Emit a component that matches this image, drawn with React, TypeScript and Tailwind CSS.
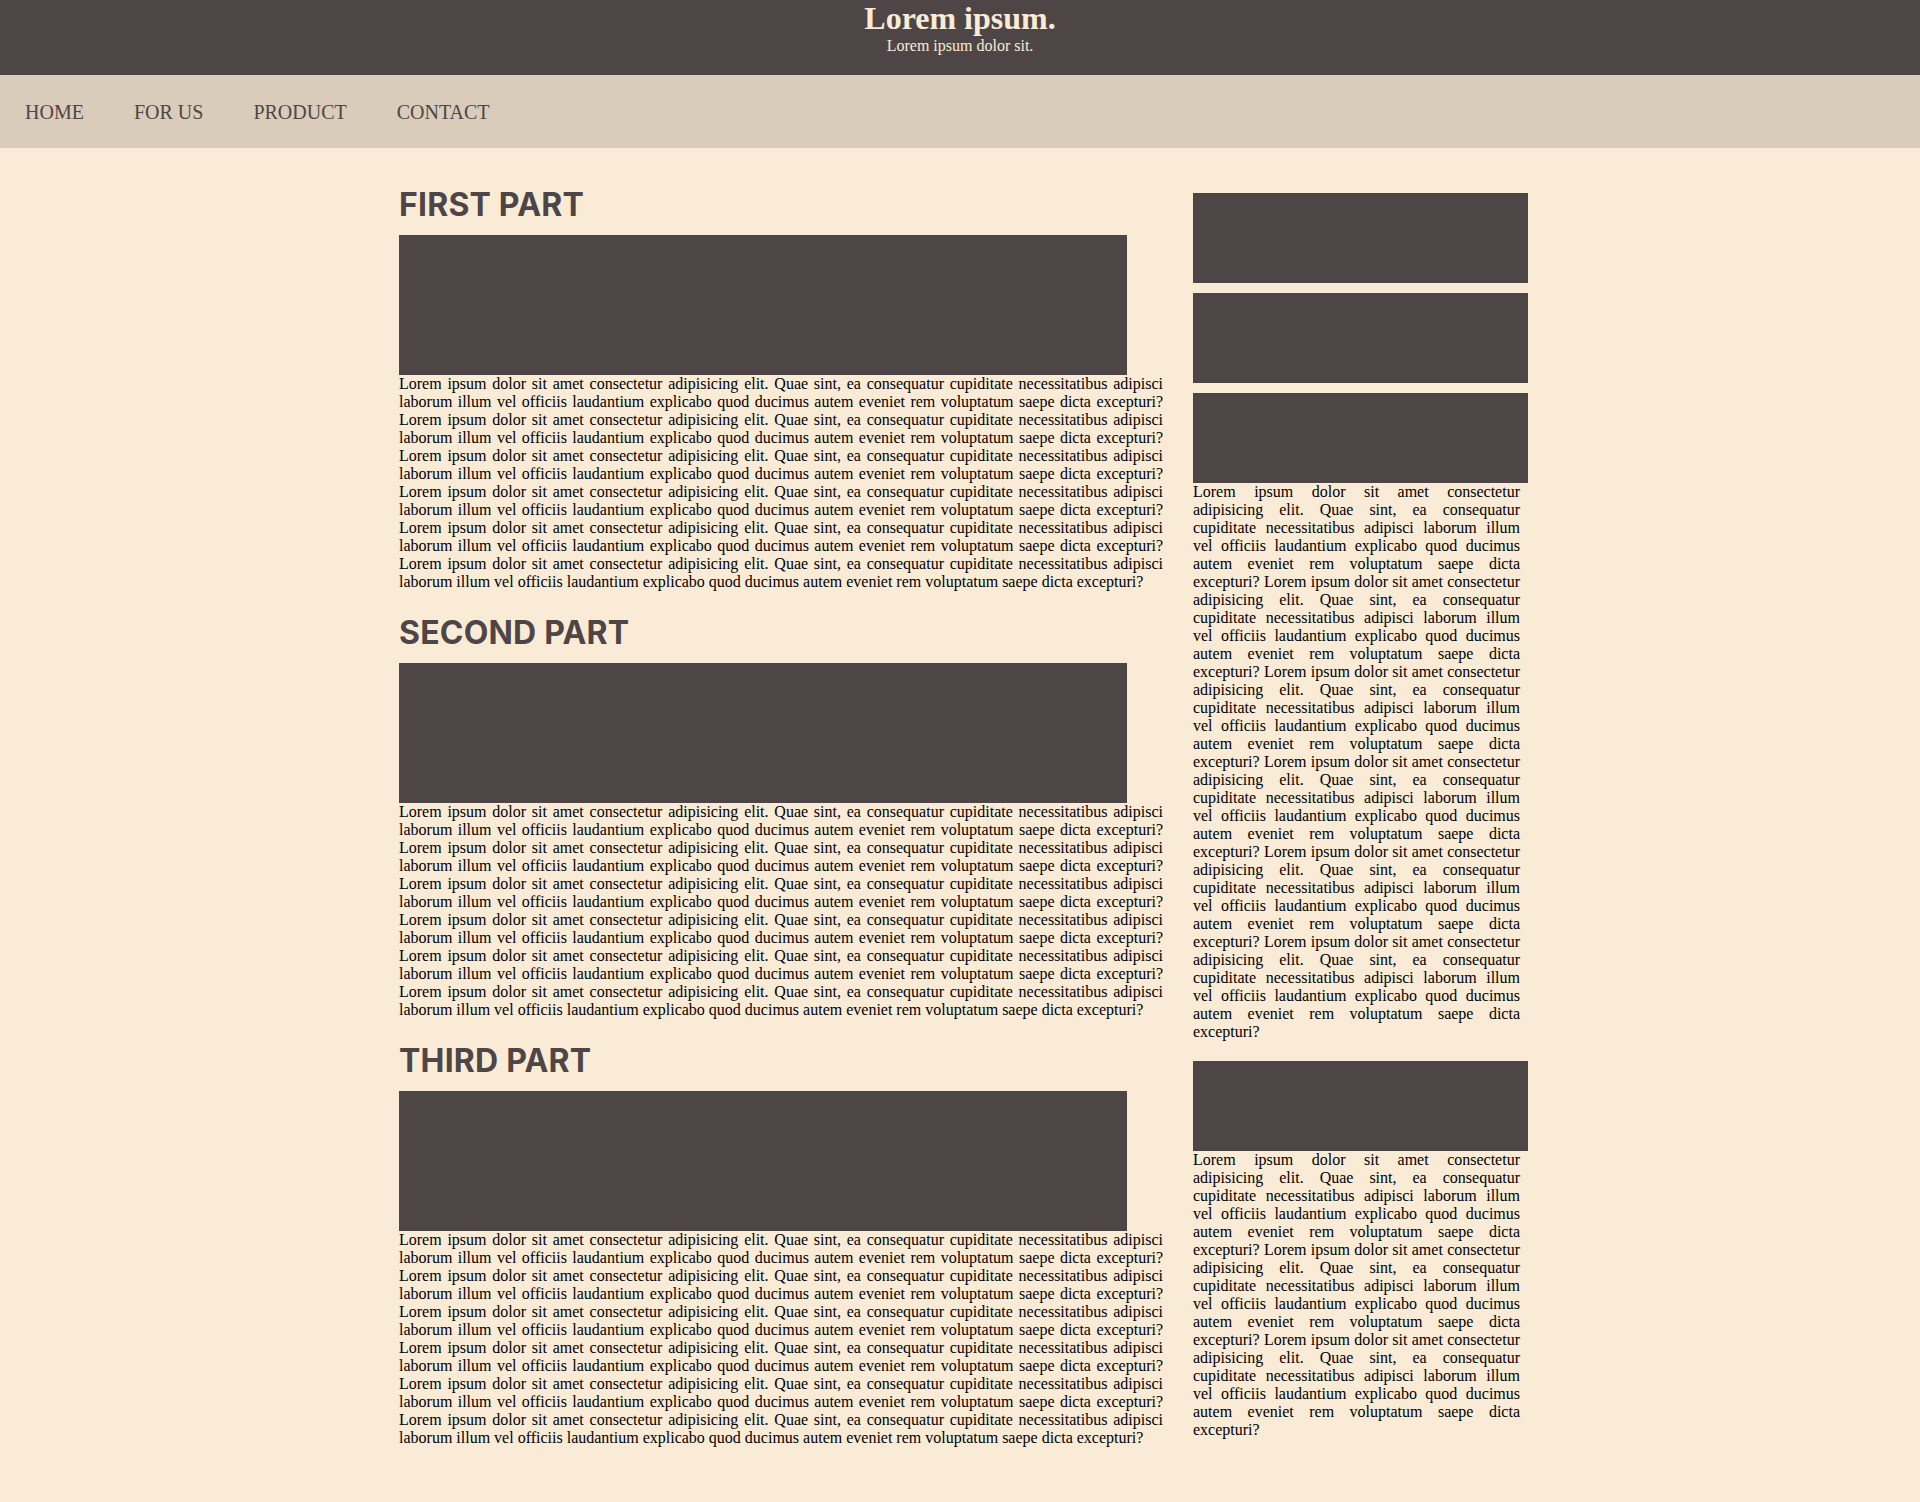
import * as React from 'react'

// ============================================================================
// CONTENT
// ============================================================================

const SENTENCE =
  'Lorem ipsum dolor sit amet consectetur adipisicing elit. Quae sint, ea consequatur cupiditate necessitatibus adipisci laborum illum vel officiis laudantium explicabo quod ducimus autem eveniet rem voluptatum saepe dicta excepturi?'

const repeat = (n: number) => Array.from({ length: n }, () => SENTENCE).join(' ')

const NAV_ITEMS = ['HOME', 'FOR US', 'PRODUCT', 'CONTACT']
const PARTS = ['FIRST PART', 'SECOND PART', 'THIRD PART']

const serif = "font-['Liberation_Serif','Times_New_Roman',serif]"

// ============================================================================
// HEADER + NAV
// ============================================================================

function Header() {
  return (
    <header className={`h-[75px] bg-[#4e4646] pt-[2px] text-center text-[#faebd7] ${serif}`}>
      <h1 className="text-[32px] font-bold leading-[32px]">Lorem ipsum.</h1>
      <p className="mt-[3px] text-[16px] leading-[18px]">Lorem ipsum dolor sit.</p>
    </header>
  )
}

function Nav() {
  return (
    <nav className={`flex h-[73px] items-center bg-[#d9ccbb] ${serif}`}>
      <ul className="flex">
        {NAV_ITEMS.map((item) => (
          <li key={item} className="px-[25px] text-[20px] leading-[24px] text-[#4e4646]">
            {item}
          </li>
        ))}
      </ul>
    </nav>
  )
}

// ============================================================================
// MAIN COLUMN
// ============================================================================

function Part({ title, first }: { title: string; first?: boolean }) {
  return (
    <section>
      <h2
        className={`${first ? '' : 'mt-[26px]'} mb-[14px] font-['Comic_Sans_MS','Inter',sans-serif] text-[32px] font-bold leading-[32px] tracking-[0.2px] text-[#4e4646]`}
      >
        {title}
      </h2>
      <div className="h-[140px] w-[728px] bg-[#4e4646]" />
      <p className={`text-justify text-[16px] leading-[18px] text-black ${serif}`}>{repeat(6)}</p>
    </section>
  )
}

// ============================================================================
// SIDEBAR
// ============================================================================

function Sidebar() {
  return (
    <aside className="mt-[4px] w-[335px]">
      <div className="flex flex-col gap-[10px]">
        <div className="h-[90px] bg-[#4e4646]" />
        <div className="h-[90px] bg-[#4e4646]" />
        <div className="h-[90px] bg-[#4e4646]" />
      </div>
      <p className={`w-[327px] text-justify text-[16px] leading-[18px] text-black ${serif}`}>{repeat(6)}</p>
      <div className="mt-[20px] h-[90px] bg-[#4e4646]" />
      <p className={`w-[327px] text-justify text-[16px] leading-[18px] text-black ${serif}`}>{repeat(3)}</p>
    </aside>
  )
}

// ============================================================================
// APP
// ============================================================================

export default function App() {
  return (
    <div className="min-h-screen bg-[#faebd7]">
      <Header />
      <Nav />
      <main className="ml-[399px] flex gap-[30px] pt-[41px] pb-[50px]">
        <div className="w-[764px]">
          {PARTS.map((p, i) => (
            <Part key={p} title={p} first={i === 0} />
          ))}
        </div>
        <Sidebar />
      </main>
    </div>
  )
}
